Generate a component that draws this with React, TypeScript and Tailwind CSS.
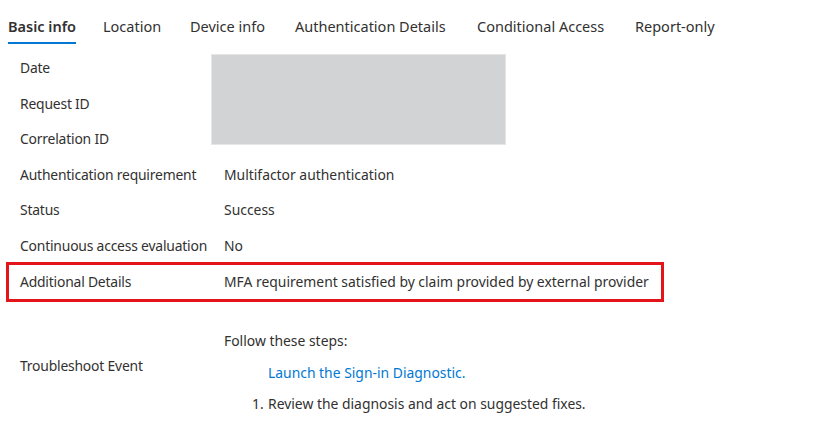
import React from 'react';

const tabs = [
  { name: 'Basic info', w: 'w-[95px]' },
  { name: 'Location', w: 'w-[87px]' },
  { name: 'Device info', w: 'w-[105px]' },
  { name: 'Authentication Details', w: 'w-[182px]' },
  { name: 'Conditional Access', w: 'w-[158px]' },
  { name: 'Report-only', w: 'w-[100px]' },
];

const rows = [
  { label: 'Authentication requirement', value: 'Multifactor authentication' },
  { label: 'Status', value: 'Success' },
  { label: 'Continuous access evaluation', value: 'No' },
];

export default function App() {
  return (
    <div
      className="w-[826px] h-[423px] bg-white text-[#323130] overflow-hidden"
      style={{ fontFamily: '"Noto Sans", "Open Sans", sans-serif' }}
    >
      {/* tabs */}
      <div className="flex items-start pl-[8px] pt-[15px] h-[51px] text-[14.5px]">
        {tabs.map((t, i) => (
          <div key={t.name} className={`${t.w} shrink-0 flex flex-col items-start`}>
            <span className={`leading-[22px] ${i === 0 ? 'font-semibold' : ''}`}>{t.name}</span>
            {i === 0 && <div className="mt-[5px] h-[2px] w-[68px] bg-[#0078d4]"></div>}
          </div>
        ))}
      </div>

      <div className="pl-[20px] text-[13.9px]">
        {/* redacted rows */}
        <div className="flex">
          <div className="w-[191px] flex flex-col tracking-[-0.2px]">
            <div className="h-[35.5px] flex items-center">Date</div>
            <div className="h-[35.5px] flex items-center">Request ID</div>
            <div className="h-[35.5px] flex items-center">Correlation ID</div>
          </div>
          <div className="pt-[3px]">
            <div className="w-[295px] h-[91px] bg-[#d2d3d5] border border-[#e6e6e6]"></div>
          </div>
        </div>

        {rows.map((r) => (
          <div key={r.label} className="h-[35.5px] flex items-center">
            <div className="w-[204px] shrink-0 tracking-[-0.2px]">{r.label}</div>
            <div>{r.value}</div>
          </div>
        ))}

        <div className="-ml-[14px] mt-[-2px] w-[658px] h-[40px] border-[3px] border-[#e3151a] pl-[11px] flex items-center">
          <div className="w-[204px] shrink-0 tracking-[-0.2px]">Additional Details</div>
          <div>MFA requirement satisfied by claim provided by external provider</div>
        </div>

        <div className="flex items-start mt-[25px]">
          <div className="w-[204px] shrink-0 pt-[29px] tracking-[-0.2px]">Troubleshoot Event</div>
          <div className="flex flex-col">
            <div className="h-[28px] flex items-center">Follow these steps:</div>
            <a className="h-[36px] flex items-center pl-[44px] text-[#0078d4]">Launch the Sign-in Diagnostic.</a>
            <ol className="list-decimal pl-[44px]">
              <li className="h-[26px] flex items-center">
                <span className="-ml-[16px] w-[16px]">1.</span>
                Review the diagnosis and act on suggested fixes.
              </li>
            </ol>
          </div>
        </div>
      </div>
    </div>
  );
}
